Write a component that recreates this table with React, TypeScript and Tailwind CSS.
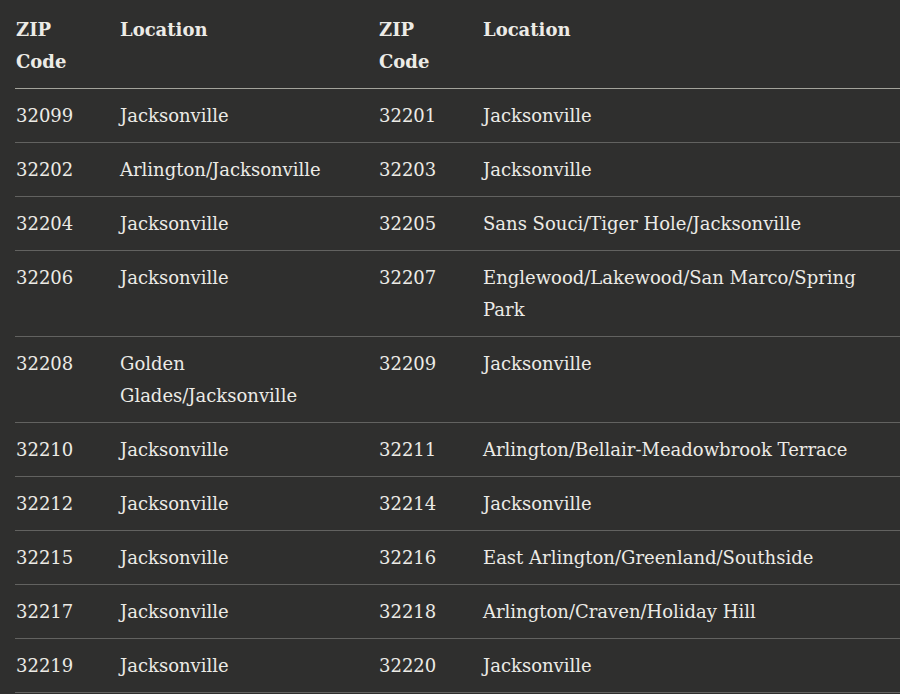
const rows: [string, string, string, string][] = [
  ['32099', 'Jacksonville', '32201', 'Jacksonville'],
  ['32202', 'Arlington/Jacksonville', '32203', 'Jacksonville'],
  ['32204', 'Jacksonville', '32205', 'Sans Souci/Tiger Hole/Jacksonville'],
  ['32206', 'Jacksonville', '32207', 'Englewood/Lakewood/San Marco/Spring Park'],
  ['32208', 'Golden Glades/Jacksonville', '32209', 'Jacksonville'],
  ['32210', 'Jacksonville', '32211', 'Arlington/Bellair-Meadowbrook Terrace'],
  ['32212', 'Jacksonville', '32214', 'Jacksonville'],
  ['32215', 'Jacksonville', '32216', 'East Arlington/Greenland/Southside'],
  ['32217', 'Jacksonville', '32218', 'Arlington/Craven/Holiday Hill'],
  ['32219', 'Jacksonville', '32220', 'Jacksonville'],
]

export default function App() {
  return (
    <div className="min-h-screen bg-[#2f2f2e] pl-[15px] pt-[3px] overflow-hidden font-['DejaVu_Serif',serif] text-[18px] leading-[32px] text-[#ecebe6]">
      <table className="w-[885px] table-fixed border-collapse text-left">
        <colgroup>
          <col className="w-[104px]" />
          <col className="w-[259px]" />
          <col className="w-[104px]" />
          <col />
        </colgroup>
        <thead>
          <tr className="border-b border-[#a3a39b]">
            <th className="pl-px pr-6 pt-[11px] pb-[10px] align-top font-bold">ZIP Code</th>
            <th className="pl-px pr-6 pt-[11px] pb-[10px] align-top font-bold">Location</th>
            <th className="pl-px pr-6 pt-[11px] pb-[10px] align-top font-bold">ZIP Code</th>
            <th className="pl-px pr-6 pt-[11px] pb-[10px] align-top font-bold">Location</th>
          </tr>
        </thead>
        <tbody>
          {rows.map((r) => (
            <tr key={r[0]} className="border-b border-[#626260]">
              {r.map((cell, i) => (
                <td key={i} className="pl-px pr-6 pt-[11px] pb-[10px] align-top">
                  {cell}
                </td>
              ))}
            </tr>
          ))}
        </tbody>
      </table>
    </div>
  )
}
